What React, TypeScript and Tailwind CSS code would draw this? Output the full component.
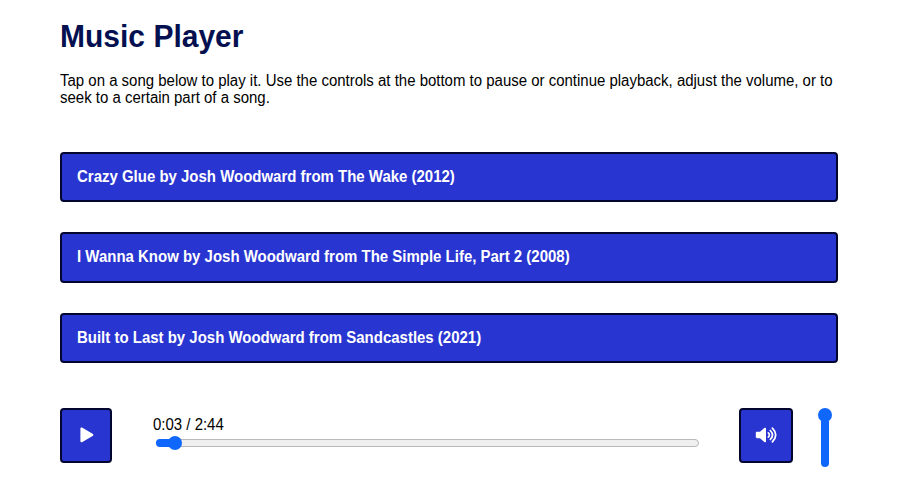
const songs = [
  'Crazy Glue by Josh Woodward from The Wake (2012)',
  'I Wanna Know by Josh Woodward from The Simple Life, Part 2 (2008)',
  'Built to Last by Josh Woodward from Sandcastles (2021)',
];

function PlayIcon() {
  return (
    <svg width="16" height="18" viewBox="0 0 16 18" fill="white" aria-hidden="true">
      <path d="M2.4 2.8C2.4 1.5 3.4 1.2 4.4 1.8L14.6 7.8C15.6 8.5 15.6 9.4 14.6 10.1L4.4 16C3.4 16.6 2.4 16.2 2.4 14.9Z" />
    </svg>
  );
}

function VolumeIcon() {
  return (
    <svg width="22" height="18" viewBox="0 0 22 18" fill="none" stroke="white" strokeWidth="1.7" strokeLinecap="round" aria-hidden="true">
      <path d="M2 5.8H5L9.3 2C10 1.4 11 1.8 11 2.7V15.3C11 16.2 10 16.6 9.3 16L5 12.2H2C1.2 12.2 .8 11.8 .8 11V7C.8 6.2 1.2 5.8 2 5.8Z" fill="white" stroke="none" />
      <path d="M13.3 6.9Q15.5 9 13.3 11.1" />
      <path d="M15.3 4.5Q19.7 9 15.3 13.5" />
      <path d="M17.4 2.2Q24 9 17.4 15.8" />
    </svg>
  );
}

export default function App() {
  return (
    <main className="h-[492px] w-[900px] overflow-hidden bg-white pl-[60px] pt-[19px] font-['Liberation_Sans',Arial,sans-serif] text-[16px] leading-[17px] text-black">
      <h1 className="h-[36px] origin-left scale-x-[0.968] text-[31px] font-bold leading-[36px] text-[#04104f]">Music Player</h1>
      <p className="mt-[17px] h-[34px] w-[831px] origin-left scale-x-[0.936]">
        Tap on a song below to play it. Use the controls at the bottom to pause or continue playback, adjust the volume, or to seek to a certain part of a song.
      </p>
      <div className="mt-[45.5px] flex w-[778px] flex-col gap-[30px]">
        {songs.map((song) => (
          <button key={song} className="flex h-[50.5px] items-center rounded-[4px] border-2 border-[#02062f] bg-[#2935d1] px-[15px] pb-[1px] text-left font-bold text-white">
            <span className="inline-block origin-left scale-x-[0.936]">{song}</span>
          </button>
        ))}
      </div>
      <div className="mt-[44.5px] flex h-[60px] items-start">
        <button aria-label="Play" className="flex h-[55px] w-[52px] items-center justify-center rounded-[4px] border-2 border-[#02062f] bg-[#2935d1]">
          <PlayIcon />
        </button>
        <div className="ml-[41px] w-[546px] pt-[8px]">
          <div className="origin-left scale-x-[0.936]">0:03 / 2:44</div>
          <div className="relative ml-[3px] mt-[6px] h-[8px] w-[543px] rounded-full border border-[#b9b9b9] bg-[#efefef]">
            <div className="absolute -left-px -top-px h-[8px] w-[20px] rounded-full bg-[#0f68fb]" />
            <div className="absolute -top-[4px] left-[11px] h-[14px] w-[14px] rounded-full bg-[#0f68fb]" />
          </div>
        </div>
        <button aria-label="Mute" className="ml-[40px] flex h-[55px] w-[54px] items-center justify-center rounded-[4px] border-2 border-[#02062f] bg-[#2935d1]">
          <VolumeIcon />
        </button>
        <div className="ml-[25px] flex w-[14px] flex-col items-center">
          <div className="h-[14px] w-[14px] rounded-full bg-[#0f68fb]" />
          <div className="-mt-[4px] h-[49px] w-[8px] rounded-full bg-[#0f68fb]" />
        </div>
      </div>
    </main>
  );
}
